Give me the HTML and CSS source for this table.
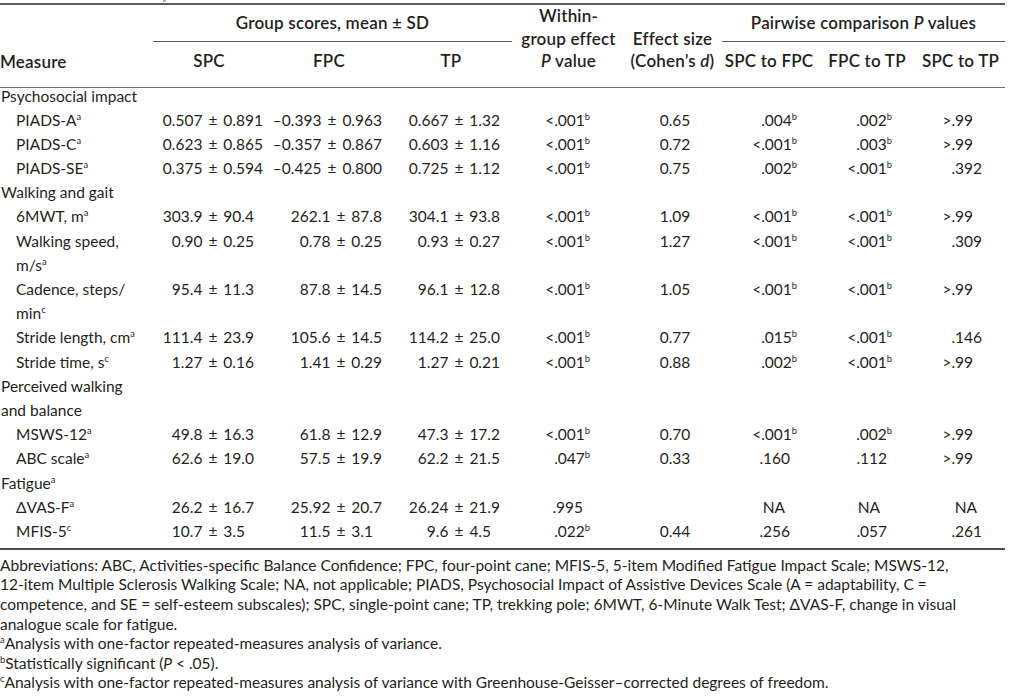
FILE: index.html
```html
<!DOCTYPE html>
<html lang="en">
<head>
<meta charset="utf-8">
<title>Table</title>
<link rel="stylesheet" href="styles.css">
</head>
<body>
<div class="page">
  <div class="title-bit"><span class="blue"></span></div>
  <table class="data">
    <colgroup>
      <col class="c-measure"><col class="c-spc"><col class="c-fpc"><col class="c-tp"><col class="c-within"><col class="c-effect"><col class="c-s2f"><col class="c-f2t"><col class="c-s2t">
    </colgroup>
    <thead>
      <tr class="h1">
        <th class="measure-h" rowspan="2">Measure</th>
        <th class="grp grp-scores" colspan="3"><div class="grp-rule">Group scores, mean ± SD</div></th>
        <th class="stack" rowspan="2">Within-<br>group effect<br><i>P</i> value</th>
        <th class="stack" rowspan="2">Effect size<br>(Cohen’s <i>d</i>)</th>
        <th class="grp grp-pair" colspan="3"><div class="grp-rule">Pairwise comparison <i>P</i> values</div></th>
      </tr>
      <tr class="h2">
        <th>SPC</th><th>FPC</th><th>TP</th>
        <th>SPC to FPC</th><th>FPC to TP</th><th>SPC to TP</th>
      </tr>
    </thead>
    <tbody>
      <tr class="first"><td class="cat" colspan="9">Psychosocial impact</td></tr>
      <tr>
        <td class="sub">PIADS-A<sup>a</sup></td>
        <td class="n spc">0.507 ± 0.891</td><td class="n fpc">–0.393 ± 0.963</td><td class="n tp">0.667 ± 1.32</td>
        <td class="n within">&lt;.001<sup>b</sup></td><td class="n effect">0.65</td>
        <td class="n s2f">.004<sup>b</sup></td><td class="n f2t">.002<sup>b</sup></td><td class="n s2t">&gt;.99&#8199;</td>
      </tr>
      <tr>
        <td class="sub">PIADS-C<sup>a</sup></td>
        <td class="n spc">0.623 ± 0.865</td><td class="n fpc">–0.357 ± 0.867</td><td class="n tp">0.603 ± 1.16</td>
        <td class="n within">&lt;.001<sup>b</sup></td><td class="n effect">0.72</td>
        <td class="n s2f">&lt;.001<sup>b</sup></td><td class="n f2t">.003<sup>b</sup></td><td class="n s2t">&gt;.99&#8199;</td>
      </tr>
      <tr>
        <td class="sub">PIADS-SE<sup>a</sup></td>
        <td class="n spc">0.375 ± 0.594</td><td class="n fpc">–0.425 ± 0.800</td><td class="n tp">0.725 ± 1.12</td>
        <td class="n within">&lt;.001<sup>b</sup></td><td class="n effect">0.75</td>
        <td class="n s2f">.002<sup>b</sup></td><td class="n f2t">&lt;.001<sup>b</sup></td><td class="n s2t">.392</td>
      </tr>
      <tr><td class="cat" colspan="9">Walking and gait</td></tr>
      <tr>
        <td class="sub">6MWT, m<sup>a</sup></td>
        <td class="n spc">303.9 ± 90.4&#8199;</td><td class="n fpc">262.1 ± 87.8</td><td class="n tp">304.1 ± 93.8</td>
        <td class="n within">&lt;.001<sup>b</sup></td><td class="n effect">1.09</td>
        <td class="n s2f">&lt;.001<sup>b</sup></td><td class="n f2t">&lt;.001<sup>b</sup></td><td class="n s2t">&gt;.99&#8199;</td>
      </tr>
      <tr>
        <td class="sub">Walking speed,<br>m/s<sup>a</sup></td>
        <td class="n spc">0.90 ± 0.25&#8199;</td><td class="n fpc">0.78 ± 0.25</td><td class="n tp">0.93 ± 0.27</td>
        <td class="n within">&lt;.001<sup>b</sup></td><td class="n effect">1.27</td>
        <td class="n s2f">&lt;.001<sup>b</sup></td><td class="n f2t">&lt;.001<sup>b</sup></td><td class="n s2t">.309</td>
      </tr>
      <tr>
        <td class="sub">Cadence, steps/<br>min<sup>c</sup></td>
        <td class="n spc">95.4 ± 11.3&#8199;</td><td class="n fpc">87.8 ± 14.5</td><td class="n tp">96.1 ± 12.8</td>
        <td class="n within">&lt;.001<sup>b</sup></td><td class="n effect">1.05</td>
        <td class="n s2f">&lt;.001<sup>b</sup></td><td class="n f2t">&lt;.001<sup>b</sup></td><td class="n s2t">&gt;.99&#8199;</td>
      </tr>
      <tr>
        <td class="sub">Stride length, cm<sup>a</sup></td>
        <td class="n spc">111.4 ± 23.9&#8199;</td><td class="n fpc">105.6 ± 14.5</td><td class="n tp">114.2 ± 25.0</td>
        <td class="n within">&lt;.001<sup>b</sup></td><td class="n effect">0.77</td>
        <td class="n s2f">.015<sup>b</sup></td><td class="n f2t">&lt;.001<sup>b</sup></td><td class="n s2t">.146</td>
      </tr>
      <tr>
        <td class="sub">Stride time, s<sup>c</sup></td>
        <td class="n spc">1.27 ± 0.16&#8199;</td><td class="n fpc">1.41 ± 0.29</td><td class="n tp">1.27 ± 0.21</td>
        <td class="n within">&lt;.001<sup>b</sup></td><td class="n effect">0.88</td>
        <td class="n s2f">.002<sup>b</sup></td><td class="n f2t">&lt;.001<sup>b</sup></td><td class="n s2t">&gt;.99&#8199;</td>
      </tr>
      <tr><td class="cat" colspan="9">Perceived walking<br>and balance</td></tr>
      <tr>
        <td class="sub">MSWS-12<sup>a</sup></td>
        <td class="n spc">49.8 ± 16.3&#8199;</td><td class="n fpc">61.8 ± 12.9</td><td class="n tp">47.3 ± 17.2</td>
        <td class="n within">&lt;.001<sup>b</sup></td><td class="n effect">0.70</td>
        <td class="n s2f">&lt;.001<sup>b</sup></td><td class="n f2t">.002<sup>b</sup></td><td class="n s2t">&gt;.99&#8199;</td>
      </tr>
      <tr>
        <td class="sub">ABC scale<sup>a</sup></td>
        <td class="n spc">62.6 ± 19.0&#8199;</td><td class="n fpc">57.5 ± 19.9</td><td class="n tp">62.2 ± 21.5</td>
        <td class="n within">.047<sup>b</sup></td><td class="n effect">0.33</td>
        <td class="n s2f ns">.160</td><td class="n f2t ns">.112</td><td class="n s2t">&gt;.99&#8199;</td>
      </tr>
      <tr><td class="cat" colspan="9">Fatigue<sup>a</sup></td></tr>
      <tr>
        <td class="sub">ΔVAS-F<sup>a</sup></td>
        <td class="n spc">26.2 ± 16.7&#8199;</td><td class="n fpc">25.92 ± 20.7</td><td class="n tp">26.24 ± 21.9</td>
        <td class="n within ns">.995</td><td class="n effect"></td>
        <td class="n s2f na">NA</td><td class="n f2t na">NA</td><td class="n s2t na">NA</td>
      </tr>
      <tr class="last">
        <td class="sub">MFIS-5<sup>c</sup></td>
        <td class="n spc">10.7 ± 3.5&#8199;&#8199;</td><td class="n fpc">11.5 ± 3.1&#8199;</td><td class="n tp">9.6 ± 4.5&#8199;</td>
        <td class="n within">.022<sup>b</sup></td><td class="n effect">0.44</td>
        <td class="n s2f ns">.256</td><td class="n f2t ns">.057</td><td class="n s2t">.261</td>
      </tr>
    </tbody>
  </table>
  <div class="notes">
    <p>Abbreviations: ABC, Activities-specific Balance Confidence; FPC, four-point cane; MFIS-5, 5-item Modified Fatigue Impact Scale; MSWS-12,</p>
    <p>12-item Multiple Sclerosis Walking Scale; NA, not applicable; PIADS, Psychosocial Impact of Assistive Devices Scale (A = adaptability, C =</p>
    <p>competence, and SE = self-esteem subscales); SPC, single-point cane; TP, trekking pole; 6MWT, 6-Minute Walk Test; ΔVAS-F, change in visual</p>
    <p>analogue scale for fatigue.</p>
    <p><sup>a</sup>Analysis with one-factor repeated-measures analysis of variance.</p>
    <p><sup>b</sup>Statistically significant (<i>P</i> &lt; .05).</p>
    <p><sup>c</sup>Analysis with one-factor repeated-measures analysis of variance with Greenhouse-Geisser–corrected degrees of freedom.</p>
  </div>
</div>
</body>
</html>
```

FILE: styles.css
```css
html, body {
  margin: 0;
  padding: 0;
  background: #ffffff;
}

body {
  font-family: Lato, "Open Sans", sans-serif;
  font-size: 15.5px;
  color: #231f20;
}

.page {
  width: 1014px;
  overflow: hidden;
}

.title-bit {
  height: 3px;
  padding-left: 163px;
}

.title-bit .blue {
  display: block;
  width: 3px;
  height: 2px;
  background: #8ab8dc;
}

.data {
  width: 1005px;
  border-collapse: collapse;
  table-layout: fixed;
  border-top: 2px solid #58595b;
  border-bottom: 2px solid #4d4d4f;
}

.c-measure { width: 150px; }
.c-spc { width: 118px; }
.c-fpc { width: 122px; }
.c-tp { width: 122px; }
.c-within { width: 113px; }
.c-effect { width: 95px; }
.c-s2f { width: 98px; }
.c-f2t { width: 98px; }
.c-s2t { width: 89px; }

th {
  font-size: 17px;
  font-weight: 600;
  letter-spacing: 0.2px;
  line-height: 22.5px;
  padding: 0;
  text-align: center;
  white-space: nowrap;
}

thead {
  border-bottom: 1px solid #6d6e71;
}

.h1 th.grp {
  padding-top: 5.5px;
  padding-bottom: 0;
  vertical-align: bottom;
}

.grp-scores {
  padding-left: 3px;
  padding-right: 0;
}

.grp-pair {
  padding-left: 2px;
}

.grp-rule {
  border-bottom: 1px solid #58595b;
  padding-bottom: 7px;
}

.h2 th {
  height: 45px;
  padding-top: 8px;
  padding-bottom: 14px;
  box-sizing: border-box;
  vertical-align: top;
}

.measure-h {
  text-align: left;
  vertical-align: bottom;
  padding-bottom: 13px;
}

.stack {
  vertical-align: bottom;
  padding-bottom: 14px;
}

td {
  line-height: 24.2px;
  padding: 0;
  vertical-align: top;
  white-space: nowrap;
}

.first td {
  line-height: 16.5px;
  padding-bottom: 3.6px;
}

.last td {
  padding-bottom: 4.5px;
}

.cat {
  padding-left: 1px;
}

.sub {
  padding-left: 16px;
}

.n {
  text-align: right;
  word-spacing: 2px;
}

.spc { padding-right: 5px; }
.fpc { padding-right: 8px; }
.tp { padding-right: 12px; }
.within { padding-right: 35px; }
.effect { text-align: center; padding-left: 5px; }
.s2f { padding-right: 21px; }
.f2t { padding-right: 24px; }
.s2t { padding-right: 23px; }

.s2f.ns { padding-right: 28px; }
.f2t.ns { padding-right: 29px; }
.within.ns { padding-right: 42px; }
.s2f.na { padding-right: 33px; }
.f2t.na { padding-right: 36px; }
.s2t.na { padding-right: 28px; }

sup {
  font-size: 0.6em;
  line-height: 0;
  vertical-align: 6px;
}

.notes {
  padding-top: 6px;
}

.notes p {
  margin: 0;
  line-height: 19.6px;
  white-space: nowrap;
}
```
